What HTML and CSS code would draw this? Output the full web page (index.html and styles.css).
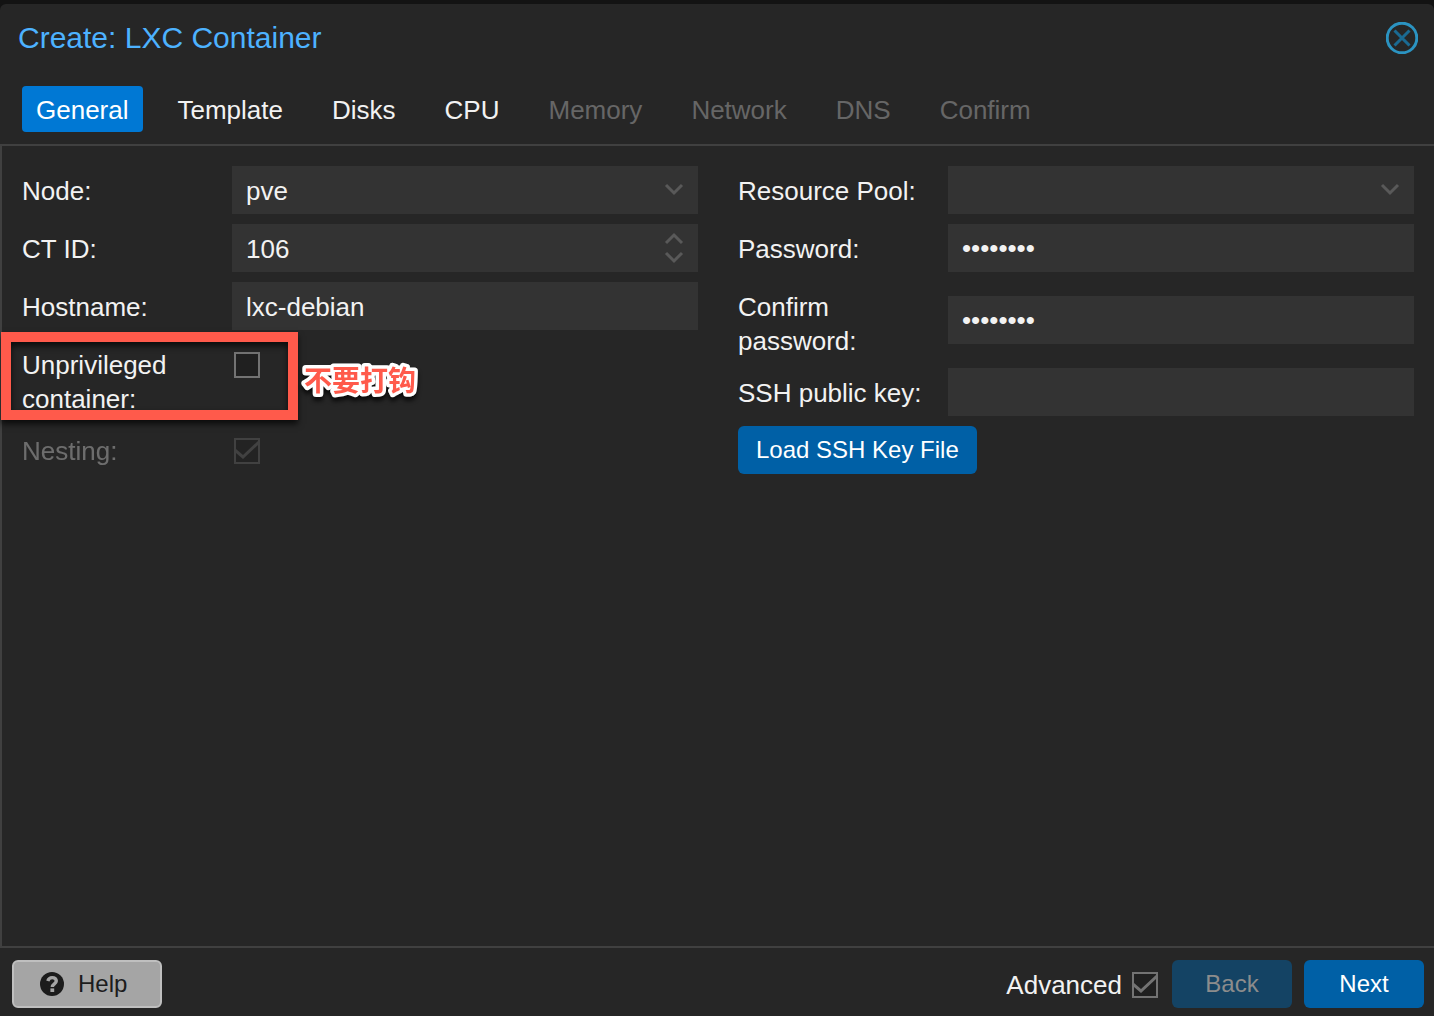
FILE: index.html
```html
<!DOCTYPE html>
<html lang="en">
<head>
  <meta charset="UTF-8">
  <meta name="viewport" content="width=device-width, initial-scale=1.0">
  <title>Create: LXC Container</title>
  <link rel="stylesheet" href="styles.css">
</head>
<body>
  <div class="window">
    <header class="window-header">
      <h1>Create: LXC Container</h1>
      <button type="button" class="close-button" aria-label="Close">
        <svg viewBox="0 0 32 32" width="32" height="32">
          <circle cx="16" cy="16" r="14.800" stroke="#2b93c1" />
          <path d="M8.500 8.500 L23.500 23.500 M23.500 8.500 L8.500 23.500" stroke="#1a6a92" />
        </svg>
      </button>
    </header>

    <nav class="tabs">
      <button type="button" class="tab active">General</button>
      <button type="button" class="tab">Template</button>
      <button type="button" class="tab">Disks</button>
      <button type="button" class="tab">CPU</button>
      <button type="button" class="tab" disabled>Memory</button>
      <button type="button" class="tab" disabled>Network</button>
      <button type="button" class="tab" disabled>DNS</button>
      <button type="button" class="tab" disabled>Confirm</button>
    </nav>

    <main class="panel">
      <div class="column">
        <div class="row">
          <label for="node">Node:</label>
          <div class="field">
            <select id="node">
              <option>pve</option>
            </select>
            <svg class="trigger" viewBox="0 0 20 48" width="20" height="48">
              <path d="M2 19 L10 27 L18 19" />
            </svg>
          </div>
        </div>
        <div class="row">
          <label for="ctid">CT ID:</label>
          <div class="field">
            <input type="number" id="ctid" value="106">
            <svg class="trigger" viewBox="0 0 20 48" width="20" height="48">
              <path d="M2 19 L10 11 L18 19 M2 29 L10 37 L18 29" />
            </svg>
          </div>
        </div>
        <div class="row">
          <label for="hostname">Hostname:</label>
          <div class="field">
            <input type="text" id="hostname" value="lxc-debian">
          </div>
        </div>
        <div class="row row-check">
          <label for="unprivileged">Unprivileged container:</label>
          <input type="checkbox" id="unprivileged">
          <div class="highlight"></div>
          <svg class="note" width="132" height="48" lang="zh-CN">
            <text x="10" y="33">不要打钩</text>
          </svg>
        </div>
        <div class="row row-check row-disabled">
          <label for="nesting">Nesting:</label>
          <input type="checkbox" id="nesting" checked disabled>
        </div>
      </div>

      <div class="column">
        <div class="row">
          <label for="pool">Resource Pool:</label>
          <div class="field">
            <select id="pool">
              <option></option>
            </select>
            <svg class="trigger" viewBox="0 0 20 48" width="20" height="48">
              <path d="M2 19 L10 27 L18 19" />
            </svg>
          </div>
        </div>
        <div class="row">
          <label for="password">Password:</label>
          <div class="field">
            <input type="password" id="password" value="password">
          </div>
        </div>
        <div class="row">
          <label for="confirm">Confirm password:</label>
          <div class="field">
            <input type="password" id="confirm" value="password">
          </div>
        </div>
        <div class="row">
          <label for="sshkey">SSH public key:</label>
          <div class="field">
            <input type="text" id="sshkey">
          </div>
        </div>
        <button type="button" class="button load-button">Load SSH Key File</button>
      </div>
    </main>

    <footer class="toolbar">
      <button type="button" class="button help-button">
        <svg viewBox="0 0 24 24" width="24" height="24">
          <circle cx="12" cy="12" r="12" fill="#1c1c1c" />
          <path d="M7.800 9 C8.500 6.800 10 5.600 12.200 5.600 C14.800 5.600 16.300 7.200 16.300 9 C16.300 11.800 12.300 11.800 12.300 15" fill="none" stroke="#a5a5a5" stroke-width="3.400" />
          <rect x="10.400" y="16.400" width="3.800" height="3.600" fill="#a5a5a5" />
        </svg>
        Help
      </button>
      <div class="advanced">
        <label for="advanced">Advanced</label>
        <input type="checkbox" id="advanced" checked>
      </div>
      <button type="button" class="button step-button" disabled>Back</button>
      <button type="button" class="button step-button">Next</button>
    </footer>
  </div>
</body>
</html>
```
FILE: styles.css
```css
* {
  box-sizing: border-box;
}

body {
  margin: 0;
  padding-top: 4px;
  background-color: #131313;
  color: #f2f2f2;
  font-family: "Liberation Sans", Arial, "Noto Sans CJK SC", sans-serif;
  font-size: 26px;
  line-height: 34px;
}

button, input, select {
  margin: 0;
  font-family: inherit;
  font-size: inherit;
  color: inherit;
}

.window {
  display: flex;
  flex-direction: column;
  min-height: calc(100vh - 4px);
  background-color: #262626;
  border-radius: 6px 6px 0 0;
}

.window-header {
  display: flex;
  align-items: center;
  justify-content: space-between;
  height: 68px;
  padding: 0 16px 0 18px;
}

h1 {
  margin: 0;
  font-size: 30px;
  font-weight: normal;
  color: #4db2ff;
}

.close-button {
  width: 32px;
  height: 32px;
  padding: 0;
  border: none;
  background: none;
}

.close-button svg {
  display: block;
  fill: none;
  stroke-width: 3;
}

/* Wizard steps */
.tabs {
  display: flex;
  gap: 21px;
  padding: 14px 22px 12px;
}

.tab {
  height: 46px;
  padding: 2px 14px 0;
  border: none;
  border-radius: 4px;
  background: none;
}

.tab.active {
  background-color: #0078d4;
  color: #fff;
}

.tab:disabled {
  color: #666;
}

/* Form */
.panel {
  flex: 1;
  display: grid;
  grid-template-columns: 1fr 1fr;
  gap: 40px;
  padding: 20px;
  border: 2px solid #404040;
  border-right: none;
}

.column {
  display: flex;
  flex-direction: column;
  gap: 10px;
}

.row {
  position: relative;
  display: flex;
  align-items: center;
  min-height: 48px;
}

.row label {
  flex: none;
  align-self: flex-start;
  width: 210px;
  padding: 8px 20px 0 0;
}

.field {
  position: relative;
  flex: 1;
}

.field input,
.field select {
  display: block;
  width: 100%;
  height: 48px;
  padding: 2px 14px 0;
  border: none;
  border-radius: 0;
  outline: none;
  background-color: #333;
  appearance: none;
}

.field input[type="number"] {
  appearance: textfield;
}

.field input[type="password"] {
  padding-top: 0;
}

.trigger {
  position: absolute;
  top: 0;
  right: 14px;
  fill: none;
  stroke: #595959;
  stroke-width: 3;
  pointer-events: none;
}

input[type="checkbox"] {
  flex: none;
  width: 26px;
  height: 26px;
  border: 2px solid #737373;
  background-color: #202020;
  appearance: none;
}

/* Tick */
input[type="checkbox"]:checked::before {
  content: "";
  display: block;
  width: 22px;
  height: 22px;
  background-color: #737373;
  clip-path: polygon(0 9px, 7px 15px, 22px 1px, 22px 5px, 7px 19px, 0 13px);
}

.row-check {
  align-items: flex-start;
}

.row-check input {
  margin: 12px 2px;
}

.row-disabled label,
.row-disabled input {
  opacity: 0.35;
}

/* Marker drawn over the unprivileged option */
.highlight {
  position: absolute;
  top: -8px;
  left: -21px;
  width: 297px;
  height: 88px;
  border: 10px solid #ff5a4b;
  box-shadow: 0 4px 6px rgba(0, 0, 0, 0.7), inset 0 4px 6px rgba(0, 0, 0, 0.7);
  pointer-events: none;
}

.note {
  position: absolute;
  top: 18px;
  left: 272px;
  fill: #ff5a4b;
  stroke: #fff;
  stroke-width: 7;
  stroke-linejoin: round;
  paint-order: stroke;
  font-size: 28px;
  font-weight: bold;
  filter: drop-shadow(0 4px 2px rgba(0, 0, 0, 0.7));
  pointer-events: none;
}

/* Buttons */
.button {
  height: 48px;
  padding: 0 18px;
  border: none;
  border-radius: 6px;
  background-color: #0060a6;
  color: #fff;
  font-size: 24px;
}

.load-button {
  align-self: flex-start;
}

.toolbar {
  display: flex;
  align-items: center;
  gap: 12px;
  padding: 12px 10px 8px 12px;
}

.help-button {
  display: flex;
  align-items: center;
  gap: 14px;
  width: 150px;
  padding: 0 26px;
  border: 2px solid #bfbfbf;
  background-color: #a5a5a5;
  color: #1c1c1c;
}

.advanced {
  display: flex;
  align-items: center;
  gap: 10px;
  margin-left: auto;
  padding: 2px 2px 0 0;
}

.step-button {
  width: 120px;
}

.step-button:disabled {
  background-color: #144364;
  color: #8c8c8c;
}
```
